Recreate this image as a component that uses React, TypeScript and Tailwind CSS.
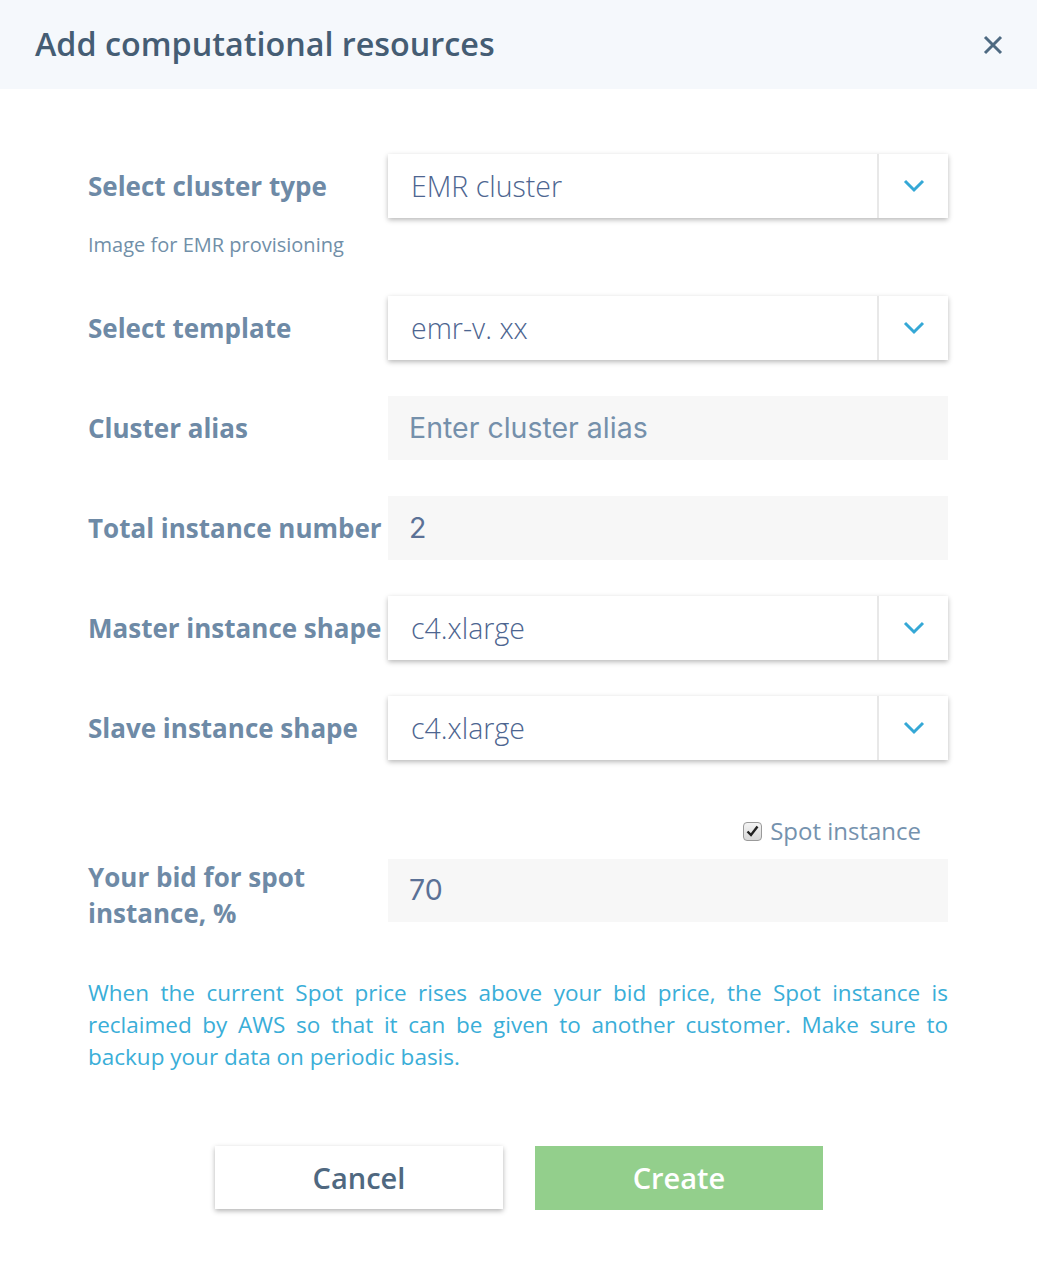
import React from "react";

const label = "text-[26px] font-bold text-[#6e8aa6] leading-[36px]";
const boxText = "text-[28.5px] font-light text-[#4d6590]";

function Chevron() {
  return (
    <svg width="22" height="14" viewBox="0 0 22 14" fill="none">
      <path d="M2 2l9 9 9-9" stroke="#35a8d6" strokeWidth="3" />
    </svg>
  );
}

function SelectBox({ value }: { value: string }) {
  return (
    <div className="flex h-[64px] w-[560px] bg-white shadow-[0_2px_5px_rgba(0,0,0,0.28)]">
      <div className={`flex flex-1 items-center pl-[23px] ${boxText}`} style={{ fontFamily: "'Open Sans', sans-serif" }}>
        {value}
      </div>
      <div className="flex w-[71px] items-center justify-center border-l-2 border-[#e8e8e8]">
        <Chevron />
      </div>
    </div>
  );
}

function InputBox({ value, placeholder }: { value?: string; placeholder?: string }) {
  return (
    <div
      className="flex h-[64px] w-[560px] items-center bg-[#f7f7f7] pl-[21px] text-[28.5px]"
      style={{ fontFamily: "Inter, sans-serif" }}
    >
      {value ? (
        <span className="text-[#5b7196]">{value}</span>
      ) : (
        <span className="text-[#7590ab]">{placeholder}</span>
      )}
    </div>
  );
}

function Row({ title, children, top }: { title: string; children: React.ReactNode; top: string }) {
  return (
    <div className={`flex items-center justify-between ${top}`}>
      <div className={label}>{title}</div>
      {children}
    </div>
  );
}

export default function App() {
  return (
    <div className="min-h-screen w-[1037px] bg-white" style={{ fontFamily: "'Open Sans', sans-serif" }}>
      {/* HEADER */}
      <div className="flex h-[89px] items-center justify-between bg-[#f5f8fc] pl-[35px] pr-[34px]">
        <h1 className="text-[32.3px] font-semibold text-[#455d74] pb-[2px]">Add computational resources</h1>
        <svg width="20" height="20" viewBox="0 0 20 20">
          <path d="M2 2l16 16M18 2L2 18" stroke="#4e6a82" strokeWidth="3" />
        </svg>
      </div>

      <div className="px-[88px] pr-[89px]">
        <Row title="Select cluster type" top="mt-[65px]">
          <SelectBox value="EMR cluster" />
        </Row>
        <div className="mt-[15px] h-[24px] text-[20px] leading-[24px] text-[#718fa8]">Image for EMR provisioning</div>

        <Row title="Select template" top="mt-[39px]">
          <SelectBox value="emr-v. xx" />
        </Row>
        <Row title="Cluster alias" top="mt-[36px]">
          <InputBox placeholder="Enter cluster alias" />
        </Row>
        <Row title="Total instance number" top="mt-[36px]">
          <InputBox value="2" />
        </Row>
        <Row title="Master instance shape" top="mt-[36px]">
          <SelectBox value="c4.xlarge" />
        </Row>
        <Row title="Slave instance shape" top="mt-[36px]">
          <SelectBox value="c4.xlarge" />
        </Row>

        {/* SPOT */}
        <div className="mt-[56px] flex h-[30px] items-center justify-end pr-[27px]">
          <span className="mr-[8px] flex h-[19px] w-[19px] items-center justify-center rounded-[4px] border border-[#9a9a9a] bg-gradient-to-b from-[#f4f4f4] to-[#d8d8d8]">
            <svg width="13" height="12" viewBox="0 0 13 12">
              <path d="M1.5 6.5l3.5 3.5 6.5-8.5" stroke="#222" strokeWidth="2.4" fill="none" />
            </svg>
          </span>
          <span className="text-[24px] text-[#7592ae]">Spot instance</span>
        </div>

        <div className="mt-[13px] flex items-start justify-between">
          <div className={label}>
            Your bid for spot
            <br />
            instance, %
          </div>
          <div className="flex h-[63px] w-[560px] items-center bg-[#f7f7f7] pl-[21px] text-[28.5px] text-[#5b7196]" style={{ fontFamily: "Inter, sans-serif" }}>
            70
          </div>
        </div>

        <p className="mt-[46px] text-justify text-[22.5px] leading-[32px] text-[#3aaed8]">
          When the current Spot price rises above your bid price, the Spot instance is reclaimed by AWS so that it can be
          given to another customer. Make sure to backup your data on periodic basis.
        </p>
      </div>

      {/* BUTTONS */}
      <div className="mt-[73px] flex justify-center gap-[32px] pl-[1px]">
        <button className="h-[63px] w-[288px] bg-white text-[29px] font-semibold text-[#4f6880] shadow-[0_2px_5px_rgba(0,0,0,0.3)]">
          Cancel
        </button>
        <button className="h-[64px] w-[288px] bg-[#93cf8c] text-[29px] font-semibold text-white">Create</button>
      </div>
    </div>
  );
}
